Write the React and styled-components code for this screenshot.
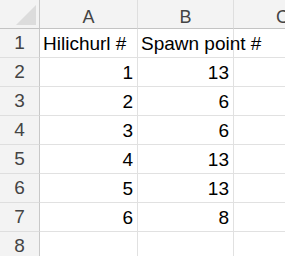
import React from 'react'
import styled, { createGlobalStyle } from 'styled-components'

const GlobalStyle = createGlobalStyle`
  html, body {
    margin: 0;
    padding: 0;
    background: #ffffff;
  }
  body {
    font-family: "Liberation Sans", Arial, sans-serif;
  }
`

const rows = [
  ['Hilichurl #', 'Spawn point #'],
  [1, 13],
  [2, 6],
  [3, 6],
  [4, 13],
  [5, 13],
  [6, 8],
  ['', ''],
]

const App = () => {
  return (
    <>
      <GlobalStyle />
      <Sheet>
        <Corner>
          <Triangle />
        </Corner>
        <ColHead>A</ColHead>
        <ColHead>B</ColHead>
        <ColHead>C</ColHead>
        {rows.map((r, i) => (
          <React.Fragment key={i}>
            <RowHead>{i + 1}</RowHead>
            <Cell num={typeof r[0] === 'number'}>{r[0]}</Cell>
            <Cell num={typeof r[1] === 'number'}>{r[1]}</Cell>
            <Cell />
          </React.Fragment>
        ))}
      </Sheet>
    </>
  )
}

export default App

const Sheet = styled.div`
  display: grid;
  grid-template-columns: 40px 98px 96px 98px;
  grid-auto-rows: 29px;
  width: 285px;
  height: 256px;
  overflow: hidden;
`

const Corner = styled.div`
  background: #f3f3f3;
  border-right: 1px solid #c8c8c8;
  border-bottom: 1px solid #c3c3c3;
  position: relative;
`

const Triangle = styled.div`
  position: absolute;
  right: 3px;
  bottom: 3px;
  width: 0;
  height: 0;
  border-left: 20px solid transparent;
  border-bottom: 20px solid #dcdcdc;
`

const ColHead = styled.div`
  background: #f3f3f3;
  border-right: 1px solid #dedede;
  border-bottom: 1px solid #c3c3c3;
  color: #444444;
  font-size: 18px;
  display: flex;
  align-items: center;
  justify-content: center;
  padding-top: 6px;
  box-sizing: border-box;
`

const RowHead = styled.div`
  background: #f3f3f3;
  border-right: 1px solid #c8c8c8;
  border-bottom: 1px solid #dedede;
  color: #444444;
  font-size: 19px;
  display: flex;
  align-items: center;
  justify-content: center;
`

const Cell = styled.div`
  border-right: 1px solid #e1e1e1;
  border-bottom: 1px solid #e1e1e1;
  color: #000000;
  font-size: 19px;
  display: flex;
  align-items: center;
  justify-content: ${({ num }) => (num ? 'flex-end' : 'flex-start')};
  padding: 1px 4px 0 3px;
  white-space: nowrap;
  overflow: visible;
  box-sizing: border-box;
`
